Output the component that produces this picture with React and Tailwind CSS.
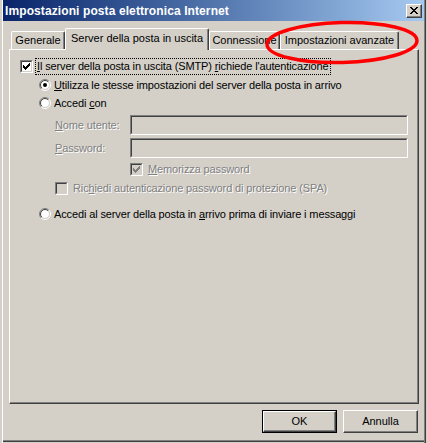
import React from "react";

const CHECK_COLS = [
  [0, 2], [1, 3], [2, 4], [3, 3], [4, 2], [5, 1], [6, 0],
];

function CheckMark({ color }) {
  return (
    <svg width="7" height="7" viewBox="0 0 7 7" shapeRendering="crispEdges" className="block">
      {CHECK_COLS.map(([x, y]) => (
        <rect key={x} x={x} y={y} width="1" height="3" fill={color} />
      ))}
    </svg>
  );
}

function Checkbox({ checked, disabled }) {
  return (
    <div className="w-[13px] h-[13px] shrink-0 border border-t-[#808080] border-l-[#808080] border-b-white border-r-white">
      <div
        className={`w-full h-full border border-t-[#404040] border-l-[#404040] border-b-[#d4d0c8] border-r-[#d4d0c8] p-[1px] ${
          disabled ? "bg-[#d4d0c8]" : "bg-white"
        }`}
      >
        {checked && <CheckMark color={disabled ? "#808080" : "#000"} />}
      </div>
    </div>
  );
}

function arc(r, dark) {
  const c = 6;
  const d = r * Math.SQRT1_2;
  const bl = `${c - d} ${c + d}`;
  const tr = `${c + d} ${c - d}`;
  return dark
    ? `M ${bl} A ${r} ${r} 0 0 1 ${tr}`
    : `M ${tr} A ${r} ${r} 0 0 1 ${bl}`;
}

function Radio({ checked }) {
  return (
    <svg width="12" height="12" viewBox="0 0 12 12" className="block shrink-0">
      <circle cx="6" cy="6" r="4.5" fill="#fff" />
      <path d={arc(5.5, true)} stroke="#808080" strokeWidth="1" fill="none" />
      <path d={arc(5.5, false)} stroke="#ffffff" strokeWidth="1" fill="none" />
      <path d={arc(4.5, true)} stroke="#404040" strokeWidth="1" fill="none" />
      <path d={arc(4.5, false)} stroke="#d4d0c8" strokeWidth="1" fill="none" />
      {checked && <circle cx="6" cy="6" r="2" fill="#000" />}
    </svg>
  );
}

const DIS = "text-[#808080] [text-shadow:1px_1px_0_#fff]";

function Tab({ children, selected, w }) {
  return (
    <div
      className={`${w} ${
        selected ? "h-[22px] -mb-[1px] bg-[#d4d0c8] pb-[2px]" : "h-[18px]"
      } flex items-center justify-center shrink-0 border-l border-t border-white border-r border-r-[#404040] rounded-t-[2px] shadow-[inset_-1px_0_0_#808080] whitespace-nowrap`}
    >
      {children}
    </div>
  );
}

function SunkenInput() {
  return (
    <div className="w-[278px] h-[20px] border border-t-[#808080] border-l-[#808080] border-b-white border-r-white">
      <div className="w-full h-full border border-t-[#404040] border-l-[#404040] border-b-[#d4d0c8] border-r-[#d4d0c8] bg-[#d4d0c8]" />
    </div>
  );
}

function Button({ children, def }) {
  return (
    <div className={`w-[75px] h-[23px] ${def ? "border border-black" : ""}`}>
      <div className="w-full h-full border border-t-white border-l-white border-b-[#404040] border-r-[#404040]">
        <div className="w-full h-full flex items-center justify-center shadow-[inset_-1px_-1px_0_#808080]">
          {children}
        </div>
      </div>
    </div>
  );
}

export default function App() {
  return (
    <div className="relative w-[427px] h-[443px] bg-[#d4d0c8] overflow-hidden text-[11px] leading-none text-black [font-family:'Liberation_Sans',Arial,sans-serif] shadow-[inset_2px_0_0_#d4d0c8,inset_3px_0_0_#fff,inset_-1px_0_0_#d4d0c8,inset_-2px_0_0_#404040,inset_-3px_0_0_#808080,inset_0_-1px_0_#d4d0c8,inset_0_-2px_0_#404040,inset_0_-3px_0_#808080]">
      {/* Title bar */}
      <div className="mx-[3px] h-[21px] flex items-center bg-gradient-to-r from-[#0a246a] to-[#a6caf0]">
        <div className="pl-[2px] text-white font-bold text-[12px] tracking-[0.1px] whitespace-nowrap">
          Impostazioni posta elettronica Internet
        </div>
        <div className="ml-auto mr-[2px] mt-[1px] w-[16px] h-[14px] border border-t-white border-l-white border-b-[#404040] border-r-[#404040] bg-[#d4d0c8] shadow-[inset_-1px_-1px_0_#808080] flex items-center justify-center">
          <svg width="8" height="7" viewBox="0 0 8 7" shapeRendering="crispEdges" className="block -mt-[1px]">
            <path d="M0 0h2v1h-2zM6 0h2v1h-2zM1 1h2v1h-2zM5 1h2v1h-2zM2 2h4v1h-4zM3 3h2v1h-2zM2 4h4v1h-4zM1 5h2v1h-2zM5 5h2v1h-2zM0 6h2v1h-2zM6 6h2v1h-2z" fill="#000" />
          </svg>
        </div>
      </div>

      <div className="ml-[9px] w-[410px]">
        {/* Tabs */}
        <div className="relative z-10 mt-[7px] h-[21px] flex items-end pl-[2px]">
          <Tab w="w-[54px]">Generale</Tab>
          <Tab w="w-[144px]" selected>
            Server della posta in uscita
          </Tab>
          <Tab w="w-[71px]">Connessione</Tab>
          <Tab w="w-[119px]">Impostazioni avanzate</Tab>
        </div>

        {/* Panel */}
        <div className="h-[355px] border border-t-white border-l-white border-b-[#404040] border-r-[#404040] shadow-[inset_-1px_-1px_0_#808080] flex flex-col tracking-[-0.13px]">
          <div className="mt-[8px] h-[17px] ml-[10px] flex items-center">
            <Checkbox checked />
            <div className="ml-[2px] h-[17px] pl-[1px] pr-[1px] flex items-center border border-dotted border-black whitespace-nowrap">
              <span>
                <u>I</u>l server della posta in uscita (SMTP) <u>r</u>ichiede l'autenticazione
              </span>
            </div>
          </div>

          <div className="mt-[4px] h-[12px] ml-[29px] flex items-center gap-[3px] whitespace-nowrap">
            <Radio checked />
            <span>
              <u>U</u>tilizza le stesse impostazioni del server della posta in arrivo
            </span>
          </div>

          <div className="mt-[6px] h-[12px] ml-[29px] flex items-center gap-[3px] whitespace-nowrap">
            <Radio />
            <span>
              Accedi <u>c</u>on
            </span>
          </div>

          <div className="mt-[6px] h-[20px] ml-[45px] flex items-center">
            <div className={`w-[75px] ${DIS}`}>
              <u>N</u>ome utente:
            </div>
            <SunkenInput />
          </div>

          <div className="mt-[3px] h-[20px] ml-[45px] flex items-center">
            <div className={`w-[75px] ${DIS}`}>
              <u>P</u>assword:
            </div>
            <SunkenInput />
          </div>

          <div className="mt-[5px] h-[13px] ml-[120px] flex items-center gap-[5px] whitespace-nowrap">
            <Checkbox checked disabled />
            <span className={DIS}>
              <u>M</u>emorizza password
            </span>
          </div>

          <div className="mt-[6px] h-[13px] ml-[45px] flex items-center gap-[5px] whitespace-nowrap">
            <Checkbox disabled />
            <span className={DIS}>
              Ric<u>h</u>iedi autenticazione password di protezione (SPA)
            </span>
          </div>

          <div className="mt-[13px] h-[12px] ml-[29px] flex items-center gap-[3px] whitespace-nowrap">
            <Radio />
            <span>
              Accedi al server della posta in <u>a</u>rrivo prima di inviare i messaggi
            </span>
          </div>
        </div>

        {/* Buttons */}
        <div className="mt-[6px] flex justify-end gap-[6px] pr-[1px]">
          <Button def>OK</Button>
          <Button>Annulla</Button>
        </div>
      </div>

      {/* Red highlight ellipse */}
      <svg width="427" height="443" className="absolute left-0 top-0 pointer-events-none z-20">
        <ellipse
          cx="342"
          cy="42.5"
          rx="75"
          ry="20"
          transform="rotate(-1.5 342 42.5)"
          fill="none"
          stroke="#f00"
          strokeWidth="3.5"
        />
      </svg>
    </div>
  );
}
